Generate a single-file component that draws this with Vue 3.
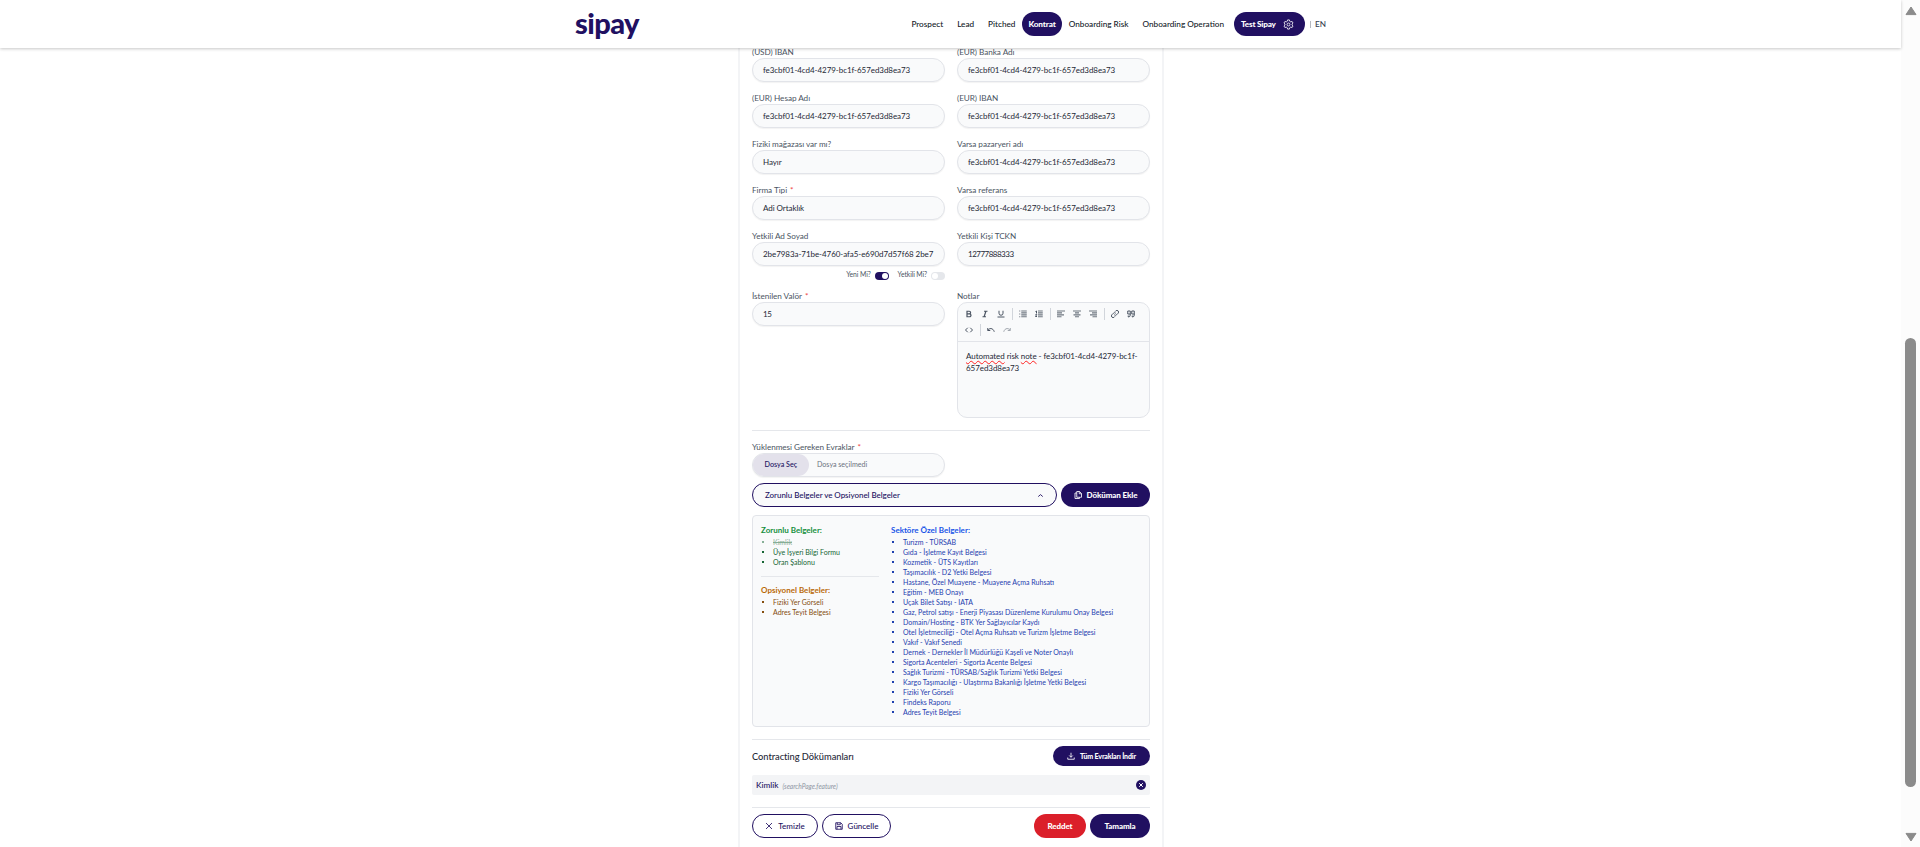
<script setup>
import { ref } from 'vue'

const uid = 'fe3cbf01-4cd4-4279-bc1f-657ed3d8ea73'
const nav = ['Prospect', 'Lead', 'Pitched', 'Kontrat', 'Onboarding Risk', 'Onboarding Operation']
const active = ref('Kontrat')

const fields = [
  { label: '(USD) IBAN', value: uid },
  { label: '(EUR) Banka Adı', value: uid },
  { label: '(EUR) Hesap Adı', value: uid },
  { label: '(EUR) IBAN', value: uid },
  { label: 'Fiziki mağazası var mı?', value: 'Hayır' },
  { label: 'Varsa pazaryeri adı', value: uid },
  { label: 'Firma Tipi', value: 'Adi Ortaklık', required: true },
  { label: 'Varsa referans', value: uid },
  { label: 'Yetkili Ad Soyad', value: '2be7983a-71be-4760-afa5-e690d7d57f68 2be7', switches: true },
  { label: 'Yetkili Kişi TCKN', value: '12777888333', digits: true },
  { label: 'İstenilen Valör', value: '15', required: true, digits: true }
]

const requiredDocs = [
  { name: 'Kimlik', done: true },
  { name: 'Üye İşyeri Bilgi Formu' },
  { name: 'Oran Şablonu' }
]
const optionalDocs = ['Fiziki Yer Görseli', 'Adres Teyit Belgesi']
const sectorDocs = [
  'Turizm - TÜRSAB',
  'Gıda - İşletme Kayıt Belgesi',
  'Kozmetik - ÜTS Kayıtları',
  'Taşımacılık - D2 Yetki Belgesi',
  'Hastane, Özel Muayene - Muayene Açma Ruhsatı',
  'Eğitim - MEB Onayı',
  'Uçak Bilet Satışı - IATA',
  'Gaz, Petrol satışı - Enerji Piyasası Düzenleme Kurulumu Onay Belgesi',
  'Domain/Hosting - BTK Yer Sağlayıcılar Kaydı',
  'Otel İşletmeciliği - Otel Açma Ruhsatı ve Turizm İşletme Belgesi',
  'Vakıf - Vakıf Senedi',
  'Dernek - Dernekler İl Müdürlüğü Kaşeli ve Noter Onaylı',
  'Sigorta Acenteleri - Sigorta Acente Belgesi',
  'Sağlık Turizmi - TÜRSAB/Sağlık Turizmi Yetki Belgesi',
  'Kargo Taşımacılığı - Ulaştırma Bakanlığı İşletme Yetki Belgesi',
  'Fiziki Yer Görseli',
  'Findeks Raporu',
  'Adres Teyit Belgesi'
]
</script>

<template>
  <div class="window">
    <div class="page">
      <header class="topbar">
        <div class="logo">sipay</div>
        <nav class="nav">
          <a v-for="n in nav" :key="n" class="nav-item" :class="{ active: n === active }" @click="active = n">{{ n }}</a>
          <a class="user">
            <span>Test Sipay</span>
            <svg viewBox="0 0 24 24" class="gear">
              <path d="M10 2h4l.7 3 2.200 1.300 3-.9 2 3.400-2.200 2.100v2.200l2.200 2.100-2 3.400-3-.9-2.200 1.300-.7 3h-4l-.7-3-2.200-1.300-3 .9-2-3.400 2.200-2.100v-2.200l-2.200-2.100 2-3.400 3 .9 2.200-1.300z" />
              <circle cx="12" cy="12" r="3.200" />
            </svg>
          </a>
          <span class="bar"></span>
          <a class="lang">EN</a>
        </nav>
      </header>

      <main class="card">
        <section class="grid">
          <div v-for="f in fields" :key="f.label" class="field">
            <label class="label">{{ f.label }}<i v-if="f.required">*</i></label>
            <div class="input" :class="{ digits: f.digits }">{{ f.value }}</div>
            <div v-if="f.switches" class="switches">
              <span>Yeni Mi?</span><b class="switch on"></b>
              <span class="second">Yetkili Mi?</span><b class="switch"></b>
            </div>
          </div>
          <div class="field">
            <label class="label">Notlar</label>
            <div class="editor">
              <div class="toolbar">
                <button class="tool"><svg viewBox="0 0 16 16"><path class="thick" d="M4 2.500h4.500a2.700 2.700 0 0 1 0 5.400H4zM4 7.900h5.200a2.800 2.800 0 0 1 0 5.600H4z" /></svg></button>
                <button class="tool"><svg viewBox="0 0 16 16"><path class="thick" d="M6 2.500h7M3 13.500h7M9.800 2.500l-3.600 11" /></svg></button>
                <button class="tool"><svg viewBox="0 0 16 16"><path d="M4 1.500v5a4 4 0 0 0 8 0v-5M1 14h14" /></svg></button>
                <span class="sep"></span>
                <button class="tool"><svg viewBox="0 0 16 16"><path class="lines" d="M4.500 2h11M4.500 5.800h11M4.500 9.800h11M4.500 13.600h11" /><path class="lines" d="M.5 2h2M.5 8h2M.5 13.600h2" /></svg></button>
                <button class="tool"><svg viewBox="0 0 16 16"><path class="lines" d="M6 2h9.500M6 5.800h9.500M6 9.800h9.500M6 13.600h9.500" /><path d="M1 3l2-1v5M1 9h2.500L1 13h3" /></svg></button>
                <span class="sep"></span>
                <button class="tool"><svg viewBox="0 0 16 16"><path class="lines" d="M0 2h16M0 5.800h10M0 9.800h14M0 13.600h9" /></svg></button>
                <button class="tool"><svg viewBox="0 0 16 16"><path class="lines" d="M0 2h16M4 5.800h8M1 9.800h14M4 13.600h8" /></svg></button>
                <button class="tool"><svg viewBox="0 0 16 16"><path class="lines" d="M0 2h16M6 5.800h10M2 9.800h14M7 13.600h9" /></svg></button>
                <span class="sep"></span>
                <button class="tool"><svg viewBox="0 0 16 16"><path d="M6.500 9.500a3.300 3.300 0 0 0 4.700 0l3-3a3.300 3.300 0 0 0-4.700-4.700L8.200 3.100M9.500 6.500a3.300 3.300 0 0 0-4.700 0l-3 3a3.300 3.300 0 0 0 4.700 4.700l1.300-1.300" /></svg></button>
                <button class="tool"><svg viewBox="0 0 16 16"><path d="M6.500 2v8q0 4-4 4v-3M6.500 2h-5v6h5M14.500 2v8q0 4-4 4v-3M14.500 2h-5v6h5" /></svg></button>
                <button class="tool"><svg viewBox="0 0 16 16"><path d="M5.500 3.500L1 8l4.500 4.500M10.500 3.500L15 8l-4.500 4.500" /></svg></button>
                <span class="sep"></span>
                <button class="tool"><svg viewBox="0 0 16 16"><path d="M1.500 4v5h5M1.800 8.800C4 4 12 3 14.500 11.500" /></svg></button>
                <button class="tool faded"><svg viewBox="0 0 16 16"><path d="M14.500 4v5h-5M14.200 8.800C12 4 4 3 1.500 11.500" /></svg></button>
              </div>
              <div class="note"><u>Automated</u> risk <u>note</u> - fe3cbf01-4cd4-4279-bc1f-<br>657ed3d8ea73</div>
            </div>
          </div>
        </section>

        <hr class="rule wide">

        <div class="field upload">
          <label class="label">Yüklenmesi Gereken Evraklar<i>*</i></label>
          <div class="file"><span class="pick">Dosya Seç</span><span class="none">Dosya seçilmedi</span></div>
        </div>

        <div class="row">
          <div class="select">
            <span>Zorunlu Belgeler ve Opsiyonel Belgeler</span>
            <svg viewBox="0 0 10 10"><path d="M2.500 6.200L5 4l2.500 2.200" /></svg>
          </div>
          <button class="btn solid add">
            <svg viewBox="0 0 16 16"><path d="M5.500 1H11l4 4v7.500H5.500zM10.500 1v4.500H15M5.500 4H2v11h9v-2.500" /></svg>
            Döküman Ekle
          </button>
        </div>

        <section class="docs">
          <div>
            <h4 class="green">Zorunlu Belgeler:</h4>
            <ul class="green-list">
              <li v-for="d in requiredDocs" :key="d.name" :class="{ done: d.done }">{{ d.name }}</li>
            </ul>
            <hr class="rule inner">
            <h4 class="amber">Opsiyonel Belgeler:</h4>
            <ul class="amber-list">
              <li v-for="d in optionalDocs" :key="d">{{ d }}</li>
            </ul>
          </div>
          <div>
            <h4 class="blue">Sektöre Özel Belgeler:</h4>
            <ul class="blue-list">
              <li v-for="d in sectorDocs" :key="d">{{ d }}</li>
            </ul>
          </div>
        </section>

        <hr class="rule wide">

        <div class="row title-row">
          <h3>Contracting Dökümanları</h3>
          <button class="btn solid download">
            <svg viewBox="0 0 16 16"><path d="M8 1.500v9M4.500 7L8 10.500 11.500 7M1.500 11v3.500h13V11" /></svg>
            Tüm Evrakları İndir
          </button>
        </div>

        <div class="document">
          <strong>Kimlik</strong><em>(searchPage.feature)</em>
          <svg viewBox="0 0 10 10"><circle cx="5" cy="5" r="5" /><path d="M3.200 3.200l3.600 3.600M6.800 3.200L3.200 6.800" /></svg>
        </div>

        <hr class="rule wide">

        <footer class="row actions">
          <button class="btn outline clear">
            <svg viewBox="0 0 16 16"><path d="M2 2l12 12M14 2L2 14" /></svg>
            Temizle
          </button>
          <button class="btn outline update">
            <svg viewBox="0 0 16 16"><path d="M1.500 1.500h10l3 3v10h-13zM4.500 1.500v4h6v-4M4 14.500V9h8v5.500" /></svg>
            Güncelle
          </button>
          <span class="grow"></span>
          <button class="btn red">Reddet</button>
          <button class="btn solid finish">Tamamla</button>
        </footer>
      </main>
    </div>

    <aside class="scrollbar">
      <svg viewBox="0 0 12 10"><path d="M6 1L11 8.600H1z" /></svg>
      <div class="thumb"></div>
      <svg viewBox="0 0 12 10"><path d="M6 9L1 1.400h10z" /></svg>
    </aside>
  </div>
</template>

<style>
body {
  overflow: hidden;
}
</style>

<style scoped>
* {
  box-sizing: border-box;
}
.window {
  display: flex;
  width: 1920px;
  height: 847px;
  overflow: hidden;
  background: #fff;
  color: #374151;
  font-family: Lato, "Noto Sans", sans-serif;
  font-size: 8px;
}
.page {
  width: 1901px;
}
svg {
  fill: none;
  stroke: currentColor;
  flex: none;
}
button {
  font: inherit;
  letter-spacing: inherit;
  border: 0;
  padding: 0;
  background: none;
  color: inherit;
}

.topbar {
  position: relative;
  z-index: 2;
  height: 48px;
  padding: 0 575px;
  display: flex;
  justify-content: space-between;
  background: #fff;
  box-shadow: 0 1px 3px rgba(0, 0, 0, 0.22);
}
.logo {
  color: #211061;
  font-size: 29px;
  font-weight: 900;
  line-height: 45px;
  letter-spacing: -0.6px;
}
.nav {
  display: flex;
  align-items: center;
  color: #111827;
  font-weight: 500;
  font-size: 8.200px;
}
.nav-item {
  height: 24px;
  line-height: 24px;
  padding: 0 7px;
  border-radius: 12px;
  white-space: nowrap;
}
.nav-item.active {
  background: #211061;
  color: #fff;
  font-weight: 900;
  padding: 0 6px;
  letter-spacing: -0.1px;
}
.user {
  display: flex;
  align-items: center;
  gap: 7px;
  width: 71px;
  height: 24px;
  margin-left: 3px;
  padding-left: 7px;
  border-radius: 12px;
  background: #211061;
  color: #fff;
  font-weight: 900;
  letter-spacing: -0.2px;
  white-space: nowrap;
}
.gear {
  width: 11px;
  height: 11px;
  stroke-width: 1.800;
}
.bar {
  width: 1px;
  height: 7px;
  margin: 0 4px 0 5px;
  background: #b6b9c0;
}
.lang {
  color: #374151;
}

.card {
  width: 426px;
  height: 801px;
  margin: -2px 0 0 738px;
  padding: 0 12px;
  border: solid #f3f4f6;
  border-width: 0 2px;
}
.grid {
  display: grid;
  grid-template-columns: 193px 193px;
  gap: 10px 12px;
}
.label {
  display: block;
  height: 12px;
  line-height: 12px;
  color: #4b5563;
  font-size: 8.200px;
  letter-spacing: -0.050px;
  white-space: nowrap;
}
.label i {
  margin-left: 3px;
  color: #ef4444;
  font-style: normal;
}
.input,
.file {
  height: 24px;
  border: 1px solid #e2e4e9;
  border-radius: 12px;
  background: #f9fafb;
  box-shadow: 0 1px 1px rgba(0, 0, 0, 0.05);
  line-height: 22px;
  white-space: nowrap;
}
.input {
  padding-left: 10px;
  color: #1f2937;
  letter-spacing: -0.060px;
}
.input.digits {
  letter-spacing: -0.500px;
}
.switches {
  height: 14px;
  padding-top: 2px;
  display: flex;
  justify-content: flex-end;
  align-items: center;
  color: #4b5563;
  font-size: 6.800px;
  letter-spacing: -0.100px;
}
.switch {
  display: block;
  width: 14px;
  height: 8px;
  margin: 4px 0 0 4px;
  border-radius: 4px;
  background: #e5e7eb;
}
.switch::after {
  content: "";
  display: block;
  width: 6px;
  height: 6px;
  margin: 1px;
  border-radius: 50%;
  background: #fff;
}
.switch.on {
  background: #211061;
}
.switch.on::after {
  margin-left: 7px;
}
.second {
  margin-left: 9px;
}

.editor {
  height: 116px;
  border: 1px solid #e2e4e9;
  border-radius: 10px;
  background: #f9fafb;
}
.toolbar {
  height: 39px;
  padding: 3px 3px 0;
  display: flex;
  flex-wrap: wrap;
  align-content: flex-start;
  color: #4b5563;
  border-bottom: 1px solid #e2e4e9;
}
.tool {
  display: flex;
  align-items: center;
  justify-content: center;
  width: 16px;
  height: 16px;
}
.tool svg {
  width: 8px;
  height: 8px;
  stroke-width: 2;
}
.tool .thick {
  stroke-width: 2.400;
}
.tool .lines {
  stroke-width: 2.200;
  opacity: 0.8;
}
.faded {
  opacity: 0.5;
}
.sep {
  width: 1px;
  height: 12px;
  margin: 2px 2.500px;
  background: #d1d5db;
}
.note {
  padding: 8px 8px;
  color: #1f2937;
  line-height: 12px;
  letter-spacing: -0.060px;
  white-space: nowrap;
}
.note u {
  text-decoration: underline wavy #f22 1.300px;
  text-underline-offset: 1px;
  text-decoration-skip-ink: none;
}

.rule {
  height: 1px;
  border: 0;
  margin: 12px 0 0;
  background: #e5e7eb;
}
.upload {
  width: 193px;
  margin: 10px 0 6px;
}
.file {
  display: flex;
  overflow: hidden;
}
.pick {
  width: 57px;
  margin-left: -1px;
  padding-left: 12.500px;
  border-radius: 12px;
  background: #e3e1eb;
  color: #211061;
  font-weight: 500;
  font-size: 7.200px;
}
.none {
  padding-left: 8px;
  color: #6b7280;
  font-size: 7.100px;
}
.row {
  display: flex;
  align-items: center;
  gap: 4px;
}
.select {
  display: flex;
  align-items: center;
  justify-content: space-between;
  width: 305px;
  height: 24px;
  padding: 0 11px 0 12px;
  border: 1px solid #211061;
  border-radius: 12px;
  background: #f9fafb;
  color: #211061;
  font-weight: 500;
  letter-spacing: -0.040px;
}
.select svg {
  width: 9px;
  height: 9px;
}
.btn {
  display: flex;
  align-items: center;
  justify-content: center;
  gap: 5px;
  height: 24px;
  border-radius: 12px;
  font-weight: 900;
  letter-spacing: -0.100px;
  white-space: nowrap;
}
.btn svg {
  width: 8px;
  height: 8px;
  stroke-width: 1.700;
}
.solid {
  background: #211061;
  color: #fff;
}
.add {
  width: 89px;
}
.outline {
  border: 1px solid #211061;
  color: #211061;
  font-weight: 500;
  letter-spacing: 0;
}
.clear {
  width: 66px;
}
.update {
  width: 69px;
}
.red {
  width: 52px;
  background: #db1f2a;
  color: #fff;
}
.finish {
  width: 60px;
}
.download {
  width: 97px;
  height: 20px;
  font-size: 7px;
  letter-spacing: -0.150px;
}

.docs {
  display: grid;
  grid-template-columns: 118px 1fr;
  gap: 12px;
  height: 212px;
  margin-top: 8px;
  padding: 8px;
  border: 1px solid #e2e4e9;
  border-radius: 4px;
  background: #f9fafb;
}
h3,
h4,
ul {
  margin: 0;
  padding: 0;
  font-weight: 700;
}
h4 {
  height: 13px;
  line-height: 12px;
  font-size: 8px;
}
ul {
  padding-left: 12px;
  list-style: none;
  font-size: 7px;
  font-weight: 400;
}
li {
  height: 10px;
  line-height: 10px;
  white-space: nowrap;
}
li::before {
  content: "";
  float: left;
  width: 2px;
  height: 2px;
  margin: 4px 0 0 -11px;
  background: currentColor;
}
.green {
  color: #15903d;
}
.green-list {
  color: #166534;
}
.done {
  opacity: 0.5;
  text-decoration: line-through;
}
.inner {
  margin: 9px 0 7px;
}
.amber {
  color: #b96a08;
}
.amber-list {
  color: #854d0e;
}
.blue {
  color: #2055e8;
}
.blue-list {
  color: #1e40af;
}

.title-row {
  justify-content: space-between;
  margin: 6px 0 9px;
}
h3 {
  color: #1f2937;
  font-size: 9.300px;
  font-weight: 500;
  letter-spacing: -0.040px;
}
.document {
  display: flex;
  align-items: center;
  height: 20px;
  padding: 0 4px;
  border-radius: 2px;
  background: #f3f4f6;
}
.document strong {
  color: #211061;
  font-size: 8.200px;
  font-weight: 500;
}
.document em {
  flex: 1;
  margin: 1px 0 0 4px;
  color: #8e95a3;
  font-size: 6.600px;
}
.document svg {
  width: 10px;
  height: 10px;
  stroke: #fff;
}
.document circle {
  fill: #211061;
  stroke: none;
}
.actions {
  margin-top: 6px;
}
.grow {
  flex: 1;
}

.scrollbar {
  display: flex;
  flex-direction: column;
  align-items: center;
  width: 19px;
  padding: 6px 0 5px;
  background: #fcfcfc;
}
.scrollbar svg {
  width: 12px;
  height: 10px;
  fill: #8b8b8b;
  stroke: #8b8b8b;
  stroke-linejoin: round;
}
.thumb {
  width: 11px;
  height: 449px;
  margin: 322px 0 auto;
  border-radius: 6px;
  background: #8b8b8b;
}
</style>
